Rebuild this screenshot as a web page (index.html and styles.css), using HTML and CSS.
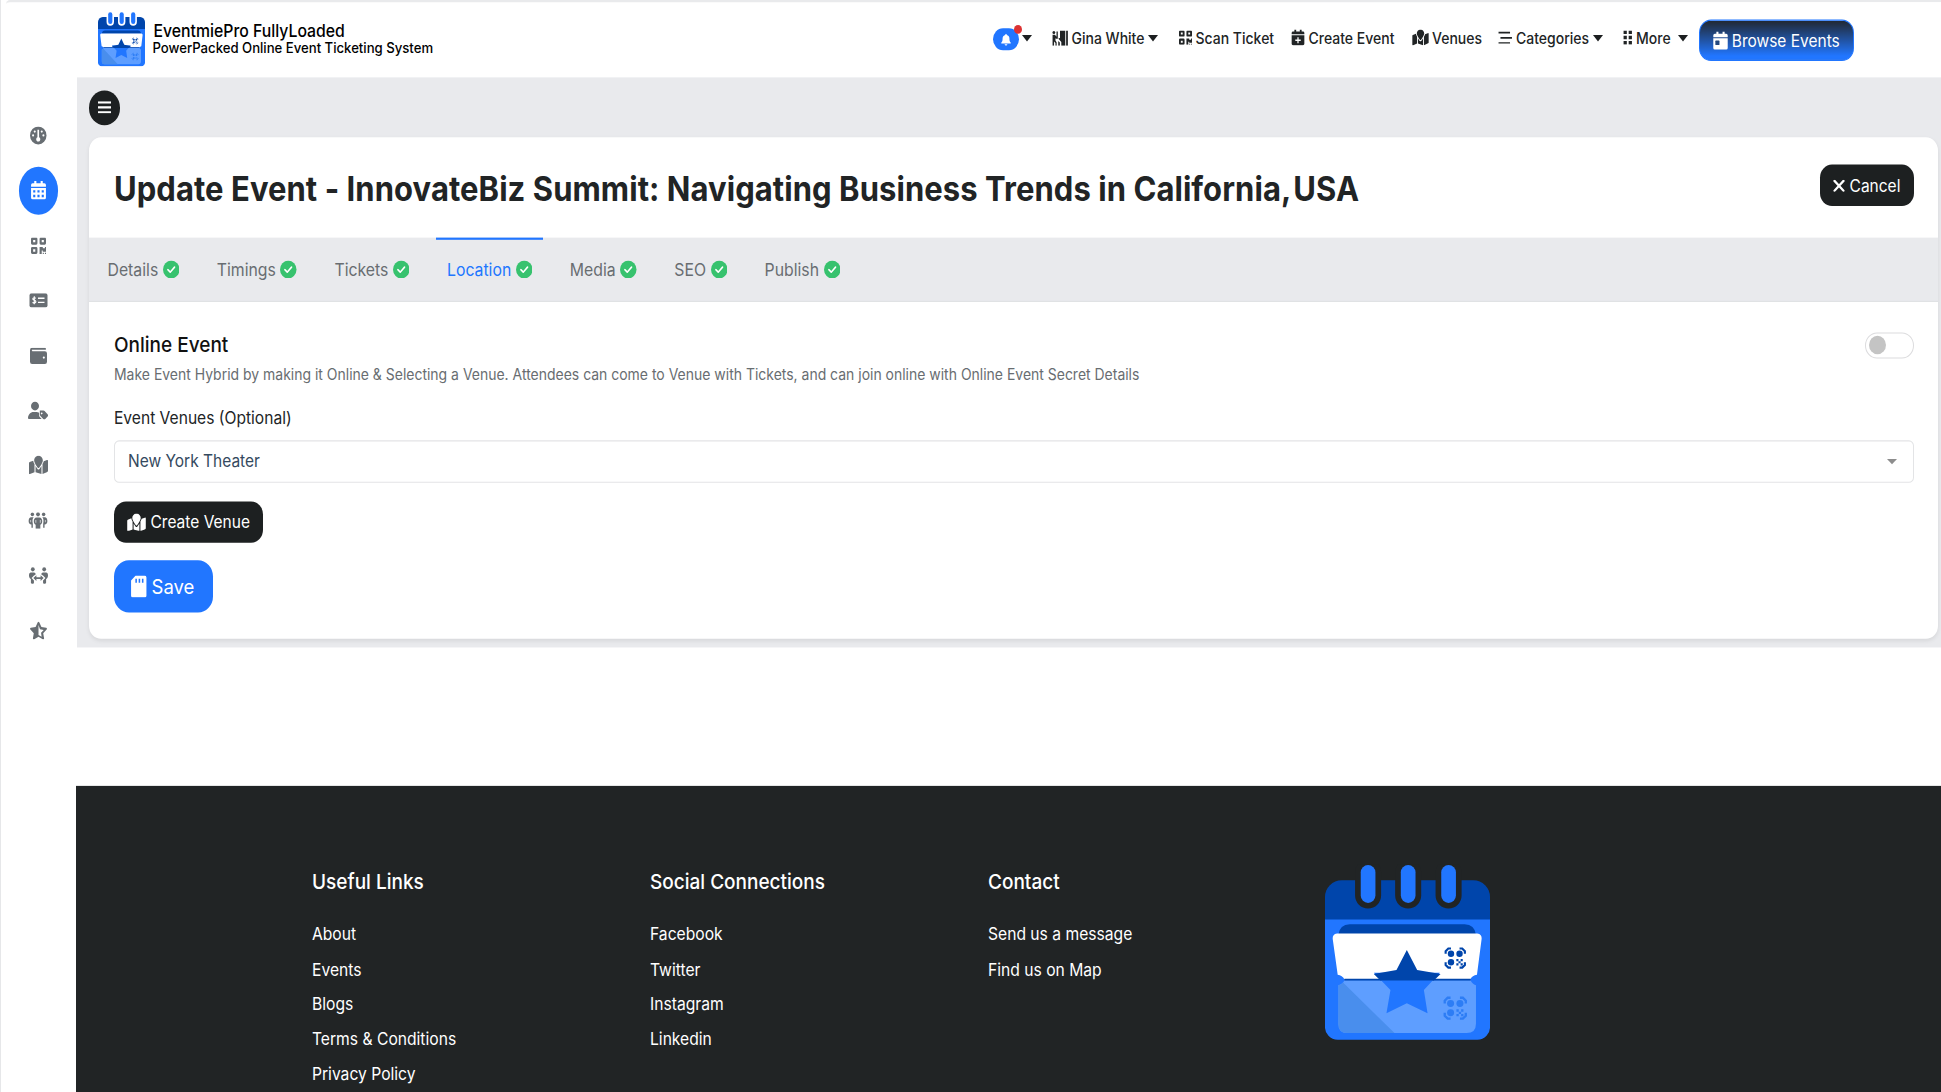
FILE: index.html
```
<!DOCTYPE html>
<html lang="en">
<head>
<meta charset="utf-8">
<title>EventmiePro FullyLoaded</title>
<link rel="stylesheet" href="styles.css">
</head>
<body>
<svg class="defs" width="0" height="0">
  <symbol id="gauge" viewBox="0 0 16 16"><circle cx="8" cy="8" r="8"/><g class="hole"><path d="M7.200 3h1.600v6.600a2 2 0 1 1-1.600 0z"/><circle cx="4.600" cy="4.600" r="1"/><circle cx="11.400" cy="4.600" r="1"/><circle cx="3" cy="8" r="1"/><circle cx="13" cy="8" r="1"/></g></symbol>
  <symbol id="days" viewBox="0 0 14 16"><path d="M3 0h2v2h4V0h2v2h1.500a1.500 1.500 0 0 1 1.500 1.500V5H0V3.500A1.500 1.500 0 0 1 1.500 2H3zM0 6h14v8.500a1.500 1.500 0 0 1-1.500 1.500h-11A1.500 1.500 0 0 1 0 14.500z"/><path class="hole" d="M2 8h2v2H2zM6 8h2v2H6zM10 8h2v2h-2zM2 12h2v2H2zM6 12h2v2H6zM10 12h2v2h-2z"/></symbol>
  <symbol id="qr" viewBox="0 0 14 14"><path fill-rule="evenodd" d="M1.200 0h3.600A1.200 1.200 0 0 1 6 1.200v3.600A1.200 1.200 0 0 1 4.800 6H1.200A1.200 1.200 0 0 1 0 4.800V1.200A1.200 1.200 0 0 1 1.200 0zM2 2v2h2V2zM9.200 0h3.600A1.200 1.200 0 0 1 14 1.200v3.600A1.200 1.200 0 0 1 12.800 6H9.200A1.200 1.200 0 0 1 8 4.800V1.200A1.200 1.200 0 0 1 9.200 0zM10 2v2h2V2zM1.200 8h3.600A1.200 1.200 0 0 1 6 9.200v3.600A1.200 1.200 0 0 1 4.800 14H1.200A1.200 1.200 0 0 1 0 12.800V9.200A1.200 1.200 0 0 1 1.200 8zM2 10v2h2v-2zM8 8h3v1h2V8h1v4h-3v-1h-1v3H8zM11 13h1v1h-1zM13 13h1v1h-1z"/></symbol>
  <symbol id="money" viewBox="0 0 18 13"><rect width="18" height="13" rx="2"/><g class="hole-line"><path d="M8.500 4.600H15M8.500 8.400H15" stroke-width="1.300"/><path d="M6.300 4.700C5.800 4 3.400 3.800 3.300 5.200c0 1.400 3.100 1 3.100 2.600 0 1.500-2.500 1.400-3.300.5M4.800 2.800v7.400" stroke-width="1.100"/></g></symbol>
  <symbol id="wallet" viewBox="0 0 16 14"><path d="M2 0h12a1 1 0 0 1 0 2H2.500a.5.500 0 0 0 0 1H14a2 2 0 0 1 2 2v7a2 2 0 0 1-2 2H2a2 2 0 0 1-2-2V2a2 2 0 0 1 2-2z"/><path class="hole" d="M1.800 1.700h12.500v.9H1.800z"/><circle class="hole" cx="13" cy="8.500" r="1"/></symbol>
  <symbol id="usertag" viewBox="0 0 20 16"><circle cx="7" cy="4" r="4"/><path d="M5.600 9.500h2.800c1 0 1.900.3 2.700.7v2.300c0 .6.200 1.200.7 1.600l1.900 1.900H.9A.9.900 0 0 1 0 15.100c0-3.100 2.500-5.600 5.600-5.600z"/><path fill-rule="evenodd" d="M11.900 8.100h3.600c.4 0 .8.200 1.100.4l3 3c.6.600.6 1.500 0 2.100l-2.300 2.300c-.6.600-1.500.6-2.100 0l-3-3a1.500 1.500 0 0 1-.4-1V8.200zM13.700 10a.8.800 0 1 0 .01 0z"/></symbol>
  <symbol id="map" viewBox="0 0 18 16"><path d="M0 6.500c0-.4.200-.7.600-.9L4 4.300c.1 1 .6 2 1.200 3v7L.9 16a.7.700 0 0 1-.9-.6zM12.800 7.300c.6-1 1-1.700 1.200-2.500L17 3.800a.7.700 0 0 1 1 .6v8.800c0 .4-.2.700-.6.9l-4.600 1.800zM6.200 9c.6 1 1.300 1.900 1.900 2.600.5.600 1.300.6 1.800 0 .6-.7 1.300-1.600 1.900-2.600v6.900l-5.600-1.600z"/><path fill-rule="evenodd" d="M9 0c2.300 0 4.100 1.900 4.100 4.100 0 1.900-2.400 5-3.500 6.400-.3.400-.9.400-1.200 0C7.300 9.100 4.900 6 4.900 4.100 4.900 1.900 6.700 0 9 0z"/></symbol>
  <symbol id="people" viewBox="0 0 20 16"><circle cx="4" cy="2" r="1.800"/><circle cx="10" cy="2" r="2"/><circle cx="16" cy="2" r="1.800"/><path d="M2.800 4.800h2.600C4.200 6 3.700 8 4.500 11.200V15H3v-3C1 12 0 10.400 0 8.500c0-2 1-3.700 2.800-3.700zM17.200 4.800h-2.600c1.200 1.200 1.700 3.200.9 6.400V15H17v-3c2 0 3-1.600 3-3.500 0-2-1-3.700-2.800-3.700zM8.500 5h3c2 0 3 1.700 3 3.800 0 1.700-.8 3-2 3.500V16h-5v-3.700c-1.200-.5-2-1.800-2-3.500C5.500 6.700 6.500 5 8.500 5z"/><path class="hole" d="M7.400 7.500v2.800h.7V7.500zM12 7.500v2.800h.7V7.500zM2 7.500v2.200h.6V7.500zM17.400 7.500v2.200h.6V7.500z"/></symbol>
  <symbol id="distance" viewBox="0 0 20 16"><circle cx="4" cy="2" r="2"/><circle cx="16" cy="2" r="2"/><path d="M2 5h3.200c1.200 0 1.800.7 1.800 2l-2 1.200-2.300 2.300 2.500 2.400V15c0 1.300-2.900 1.300-3.200 0v-3.600C.6 10.700 0 9.500 0 8c0-1.800.7-3 2-3zM18 5h-3.200C13.600 5 13 5.700 13 7l2 1.200 2.300 2.300-2.500 2.400V15c0 1.300 2.900 1.300 3.200 0v-3.600c1.400-.7 2-1.900 2-3.400 0-1.800-.7-3-2-3z"/><path d="M4.600 10.500 7.800 7.700v2h4.400v-2l3.200 2.800-3.200 2.800v-2H7.800v2z"/></symbol>
  <symbol id="starhalf" viewBox="0 0 18 17"><path fill-rule="evenodd" d="M9 0c.4 0 .7.200.9.600l2.200 4.500 5 .7c.8.100 1.100 1.100.5 1.700L14 11l.9 5c.1.700-.7 1.300-1.400.9L9 14.600l-4.500 2.300c-.7.400-1.500-.2-1.400-.9L4 11 .4 7.500c-.6-.6-.3-1.600.5-1.700l5-.7L8.100.6C8.300.2 8.600 0 9 0zM9 3.200v9.600l3.300 1.800-.6-3.900 2.800-2.800-3.900-.6z"/></symbol>
  <symbol id="bell" viewBox="0 0 14 16"><path d="M7 0a1 1 0 0 0-1 1v.6A5 5 0 0 0 2 6.500c0 2.600-.4 3.700-1.700 5.100-.6.600-.2 1.400.7 1.400h12c.9 0 1.300-.8.700-1.400C12.400 10.200 12 9.100 12 6.500a5 5 0 0 0-4-4.900V1a1 1 0 0 0-1-1zM5 14h4a2 2 0 0 1-4 0z"/></symbol>
  <symbol id="booth" viewBox="0 0 18 16"><circle cx="2" cy="2" r="1.600"/><path d="M.5 4.500h2.700l1.800 2V1h1.500v7.500H4.600L3.800 8v2.500l1.400 2V16H3.800v-3L2.200 11.500V16H.5zM9 0h6v16h-4.500V12L7.500 9V7.500L9 8.200zM16 0h2v16h-2zM7 11l1.800 1.500V16H7z"/></symbol>
  <symbol id="plus" viewBox="0 0 14 16"><path d="M3 0h2v2h4V0h2v2h1.500A1.500 1.500 0 0 1 14 3.500V5H0V3.500A1.500 1.500 0 0 1 1.500 2H3zM0 6h14v8.500a1.500 1.500 0 0 1-1.500 1.500h-11A1.500 1.500 0 0 1 0 14.500z"/><path class="hole" d="M6.300 8h1.400v2.300H10v1.400H7.700V14H6.300v-2.300H4v-1.400h2.300z"/></symbol>
  <symbol id="day" viewBox="0 0 14 16"><path d="M3 0h2v2h4V0h2v2h1.500A1.500 1.500 0 0 1 14 3.500V5H0V3.500A1.500 1.500 0 0 1 1.500 2H3zM0 6h14v8.500a1.500 1.500 0 0 1-1.500 1.500h-11A1.500 1.500 0 0 1 0 14.500z"/><rect class="hole" x="2" y="8" width="4" height="4" rx=".5"/></symbol>
  <symbol id="bars" viewBox="0 0 14 12"><path d="M0 0h12v1.700H0zM2 5.150h12v1.700H2zM0 10.300h12V12H0z"/></symbol>
  <symbol id="grip" viewBox="0 0 9 14"><path d="M0 0h3.500v3.500H0zM5.500 0H9v3.500H5.500zM0 5.200h3.500v3.500H0zM5.500 5.200H9v3.500H5.500zM0 10.400h3.500v3.500H0zM5.500 10.400H9v3.500H5.500z"/></symbol>
  <symbol id="check" viewBox="0 0 16 16"><circle cx="8" cy="8" r="8"/><path class="tick" d="m4.700 8.200 2.300 2.200 4.200-4.500"/></symbol>
  <symbol id="sd" viewBox="0 0 15 20"><path d="M4.500 0h8.700A1.800 1.800 0 0 1 15 1.800v16.400a1.800 1.800 0 0 1-1.800 1.800H1.800A1.800 1.800 0 0 1 0 18.200V4.500z"/><path class="hole" d="M4.200 3h1.500v3.400H4.200zM7.400 3h1.500v3.400H7.400zM10.600 3h1.500v3.400h-1.500z"/></symbol>
  <symbol id="scan" viewBox="0 0 20 20"><path class="scan-line" d="M1 6V3.500L3.500 1H6M14 1h2.500L19 3.500V6M1 14v2.500L3.500 19H6M19 14v2.500L16.500 19H14"/><circle cx="6" cy="6" r="3"/><circle cx="14" cy="6" r="3"/><circle cx="6" cy="14" r="3"/><path d="M11 11h2v2h-2zM15 11h2v2h-2zM13 13h2v2h-2zM11 15h2v2h-2zM15 15h2v2h-2z"/></symbol>
  <symbol id="logo" viewBox="0 0 494 530" preserveAspectRatio="none">
    <path fill="#2176ff" d="M0 160h494v328a38 38 0 0 1-38 40H38a38 38 0 0 1-38-40z"/>
    <path fill="#0045ab" d="M50 48h394a50 50 0 0 1 50 50v68H0V98a50 50 0 0 1 50-50z"/>
    <g class="ring"><rect x="107" y="2" width="44" height="114" rx="22"/><rect x="227" y="2" width="44" height="114" rx="22"/><rect x="348" y="2" width="44" height="114" rx="22"/></g>
    <path fill="#0045ab" d="M40 212q4-32 34-32h344q30 0 34 32z"/>
    <path fill="#fff" d="M36 208h420q14 2 13 16l-14 108q-14 2-20 14H58q-6-12-20-14L23 224q-1-14 13-16z"/>
    <path fill="#5e9eff" d="M40 364q14-4 18-15h378q4 11 16 15v116q0 28-28 28H66q-26 0-26-28z"/>
    <path fill="#498eed" d="M40 364q10-1 14-8l154 152H66q-26 0-26-28z"/>
    <path fill="#0045ab" d="M58 344h378v6H58z"/>
    <path fill="#2176ff" d="M146 326 344 326 296 378 307 448 245 418 184 448 196 378z"/>
    <path fill="#0045ab" d="m245 258 31 60 70 12-20 20H166l-20-20 68-12z"/>
    <use href="#scan" x="358" y="250" width="64" height="64" fill="#0045ab" color="#0045ab"/>
    <use href="#scan" x="355" y="398" width="70" height="70" fill="#2d7df5" color="#2d7df5"/>
  </symbol>
</svg>

<div class="page">
  <aside class="sidebar">
    <a class="side-item"><svg width="16.500" height="16.500"><use href="#gauge"/></svg></a>
    <a class="side-item active"><svg width="15" height="17"><use href="#days"/></svg></a>
    <a class="side-item"><svg width="15" height="15"><use href="#qr"/></svg></a>
    <a class="side-item"><svg width="19" height="13"><use href="#money"/></svg></a>
    <a class="side-item"><svg width="17" height="15"><use href="#wallet"/></svg></a>
    <a class="side-item"><svg width="20" height="17"><use href="#usertag"/></svg></a>
    <a class="side-item"><svg width="19" height="17"><use href="#map"/></svg></a>
    <a class="side-item"><svg width="20" height="15"><use href="#people"/></svg></a>
    <a class="side-item"><svg width="19" height="16"><use href="#distance"/></svg></a>
    <a class="side-item"><svg width="17" height="17"><use href="#starhalf"/></svg></a>
  </aside>

  <div class="content">
    <header class="header">
      <a class="brand">
        <svg width="47" height="50"><use href="#logo"/></svg>
        <span class="brand-text"><span class="brand-name">EventmiePro FullyLoaded</span><span class="brand-tag">PowerPacked Online Event Ticketing System</span></span>
      </a>
      <nav class="nav">
        <a class="bell-item"><span class="bell"><svg width="10" height="11"><use href="#bell"/></svg></span><i class="caret"></i></a>
        <a><svg width="16" height="14"><use href="#booth"/></svg>Gina White<i class="caret"></i></a>
        <a><svg width="13" height="13"><use href="#qr"/></svg>Scan Ticket</a>
        <a><svg width="14" height="14.500"><use href="#plus"/></svg>Create Event</a>
        <a><svg width="17" height="14.500"><use href="#map"/></svg>Venues</a>
        <a><svg width="14.500" height="11.500"><use href="#bars"/></svg>Categories<i class="caret"></i></a>
        <a><svg width="9.500" height="13"><use href="#grip"/></svg>More<i class="caret far"></i></a>
        <a class="btn browse"><svg width="15" height="16.500"><use href="#day"/></svg>Browse Events</a>
      </nav>
    </header>

    <main class="main">
      <button class="menu"><svg width="13" height="11"><path d="M0 .9h13M0 5.500h13M0 10.100h13" stroke="#fff" stroke-width="1.900"/></svg></button>
      <section class="card">
        <div class="card-head">
          <h1>Update Event - InnovateBiz Summit: Navigating Business Trends in California, <span class="state">USA</span></h1>
          <a class="btn dark cancel"><svg width="12" height="11"><path d="m1.500 1 9 9m0-9-9 9" stroke="#fff" stroke-width="2.200" stroke-linecap="round"/></svg>Cancel</a>
        </div>
        <div class="tabs">
          <a>Details<svg><use href="#check"/></svg></a>
          <a>Timings<svg><use href="#check"/></svg></a>
          <a>Tickets<svg><use href="#check"/></svg></a>
          <a class="on">Location<svg><use href="#check"/></svg></a>
          <a>Media<svg><use href="#check"/></svg></a>
          <a>SEO<svg><use href="#check"/></svg></a>
          <a>Publish<svg><use href="#check"/></svg></a>
        </div>
        <div class="card-body">
          <div class="row">
            <h2>Online Event</h2>
            <span class="switch"><i></i></span>
          </div>
          <p class="hint">Make Event Hybrid by making it Online &amp; Selecting a Venue. Attendees can come to Venue with Tickets, and can join online with Online Event Secret Details</p>
          <label class="label">Event Venues (Optional)</label>
          <div class="select">New York Theater<i></i></div>
          <a class="btn dark create"><svg width="19" height="16.500"><use href="#map"/></svg>Create Venue</a>
          <a class="save"><svg width="15.500" height="20.500"><use href="#sd"/></svg>Save</a>
        </div>
      </section>
    </main>

    <footer class="footer">
      <div class="col"><h3>Useful Links</h3><a>About</a><a>Events</a><a>Blogs</a><a>Terms &amp; Conditions</a><a>Privacy Policy</a></div>
      <div class="col"><h3>Social Connections</h3><a>Facebook</a><a>Twitter</a><a>Instagram</a><a>Linkedin</a></div>
      <div class="col"><h3>Contact</h3><a>Send us a message</a><a>Find us on Map</a></div>
      <svg class="footer-logo" width="165" height="161.500"><use href="#logo"/></svg>
    </footer>
  </div>
</div>
</body>
</html>
```
FILE: styles.css
```
* { box-sizing: border-box; }
body { margin: 0; height: 1092px; overflow: hidden; background: #fff; font-family: Inter, "Liberation Sans", sans-serif; color: #212425; }
h1, h2, h3, p { margin: 0; }
svg { display: block; flex: none; fill: currentColor; }
symbol, use { overflow: visible; }
.defs { position: absolute; }
.hole { fill: var(--hole, #fff); }
.hole-line { fill: none; stroke: var(--hole, #fff); }
.tick { fill: none; stroke: #fff; stroke-width: 1.5; stroke-linecap: round; stroke-linejoin: round; }
.scan-line { fill: none; stroke: currentColor; stroke-width: 2; }
.ring { fill: #2176ff; stroke: var(--ring, #fff); stroke-width: 34; paint-order: stroke; }

/* the interface is drawn slightly taller than wide */
.page { display: flex; width: 1941px; height: 1002px; transform: scaleY(1.09); transform-origin: 0 0; overflow: hidden; }

.sidebar { width: 75.5px; flex: none; border-left: 1px solid #e6e7e9; padding-top: 102.6px; display: flex; flex-direction: column; align-items: center; gap: 6.95px; color: #686e73; }
.side-item { width: 39.5px; height: 43.5px; flex: none; display: flex; align-items: center; justify-content: center; border-radius: 50%; }
.side-item.active { background: #2176ff; color: #fff; --hole: #2176ff; }

.content { flex: 1; display: flex; flex-direction: column; min-width: 0; }
.header { height: 71px; flex: none; display: flex; justify-content: space-between; border-top: 2px solid #e9eaec; margin-left: -69.5px; padding-left: 92px; border-radius: 4px 0 0 0; }
.brand { display: flex; padding-top: 8.5px; gap: 8.5px; color: #000; font-weight: 500; }
.brand-text { display: flex; flex-direction: column; }
.brand-name { font-size: 15.8px; line-height: 18px; margin-top: 9px; }
.brand-tag { font-size: 13.15px; line-height: 16px; margin-top: -1.4px; margin-left: -1px; }
.nav { display: grid; grid-template-columns: 59px 127px 112px 120.5px 86.5px 125px 76px 155px; margin-right: 87px; font-size: 14px; font-weight: 500; align-items: start; }
.nav > a { display: flex; align-items: center; gap: 3.5px; height: 20px; margin-top: 22.6px; white-space: nowrap; }
.bell { position: relative; width: 25.5px; height: 20.5px; margin-top: 3px; border-radius: 11px; background: #2176ff; color: #fff; display: flex; align-items: center; justify-content: center; }
.bell::after { content: ""; position: absolute; right: -3px; top: -3px; width: 8px; height: 8px; border-radius: 50%; background: #dc3232; }
.caret { border: 5px solid transparent; border-top: 6px solid #1c1f20; border-bottom: 0; }
.far { margin-left: 4px; }

.btn { display: flex; align-items: center; justify-content: center; gap: 4.5px; height: 38.4px; border-radius: 12px; font-size: 15.5px; font-weight: 400; color: #fff; white-space: nowrap; }
.nav > .browse { height: 38.5px; margin-top: 15.5px; padding-top: 1px; border: 1px solid #2176ff; background: linear-gradient(#212832, #2176ff 90%); --hole: #23487f; }
.dark { background: #1d2021; --hole: #1d2021; }

.main { background: #e9eaed; height: 523px; flex: none; margin-left: 1px; padding: 12px 3px 8px 12.5px; }
.menu { display: flex; align-items: center; justify-content: center; width: 31px; height: 31.6px; margin-bottom: 11px; padding: 0; border: 0; border-radius: 50%; background: #1d2021; }
.card { background: #fff; border-radius: 12px; height: 460.6px; box-shadow: 0 2px 4px rgba(0, 0, 0, .08); }
.card-head { height: 92px; display: flex; justify-content: space-between; padding: 25px 24px 0 25px; }
h1 { font-size: 30.97px; line-height: 46px; font-weight: 700; letter-spacing: .07px; white-space: nowrap; margin-top: -1px; }
.state { margin-left: -4.5px; }
.cancel { width: 94.5px; padding-top: 1px; }
.tabs { height: 59px; background: #e9eaed; border-bottom: 1px solid #dfe1e4; display: flex; gap: 16.6px; padding-left: 8px; font-size: 15.8px; color: #686d71; }
.tabs a { display: flex; gap: 4.5px; align-items: center; padding: 0 10.5px; border-top: 2px solid transparent; }
.tabs svg { width: 16.5px; height: 16.5px; color: #37c26e; margin-top: -1px; }
.tabs .on { color: #2176ff; border-color: #2176ff; }
.card-body { padding: 27px 24px 0 25px; }
.row { display: flex; justify-content: space-between; align-items: center; height: 26px; }
h2 { font-size: 19px; font-weight: 500; color: #111; }
.switch { width: 49px; height: 24px; border: 1px solid #dcdcde; border-radius: 12px; padding: 2.5px 3px; }
.switch i { display: block; width: 17px; height: 17px; border-radius: 50%; background: #c4c4c4; }
.hint { font-size: 13.97px; line-height: 20px; color: #686d71; margin-top: 4.2px; white-space: nowrap; }
.label { display: block; font-size: 15.6px; line-height: 22px; margin-top: 19.3px; }
.select { height: 39.5px; margin-top: 8.5px; border: 1px solid #e3e4e6; border-radius: 5px; display: flex; align-items: center; justify-content: space-between; padding: 0 16px 1px 13px; font-size: 15.5px; color: #34495e; }
.select i { border: 5px solid transparent; border-top: 5px solid #8d8d8d; border-bottom: 0; margin-top: 1.5px; }
.create { width: 149px; margin-top: 16.5px; }
.save { display: flex; align-items: center; justify-content: center; gap: 5px; width: 98.5px; height: 48.5px; margin-top: 16px; padding-right: 1px; border-radius: 15px; background: #2176ff; --hole: #2176ff; color: #fff; font-size: 18.5px; }

.footer { flex: 1; margin-top: 127.2px; margin-left: .5px; background: #212425; color: #fff; display: grid; grid-template-columns: 338px 338px 337px 300px; padding: 76.3px 0 0 236px; align-items: start; }
.col { display: flex; flex-direction: column; }
h3 { font-size: 19px; line-height: 26px; font-weight: 500; margin-bottom: 17.9px; }
.col a { font-size: 15.65px; line-height: 32.2px; }
.footer-logo { --ring: #212425; margin-top: -4px; }
```
